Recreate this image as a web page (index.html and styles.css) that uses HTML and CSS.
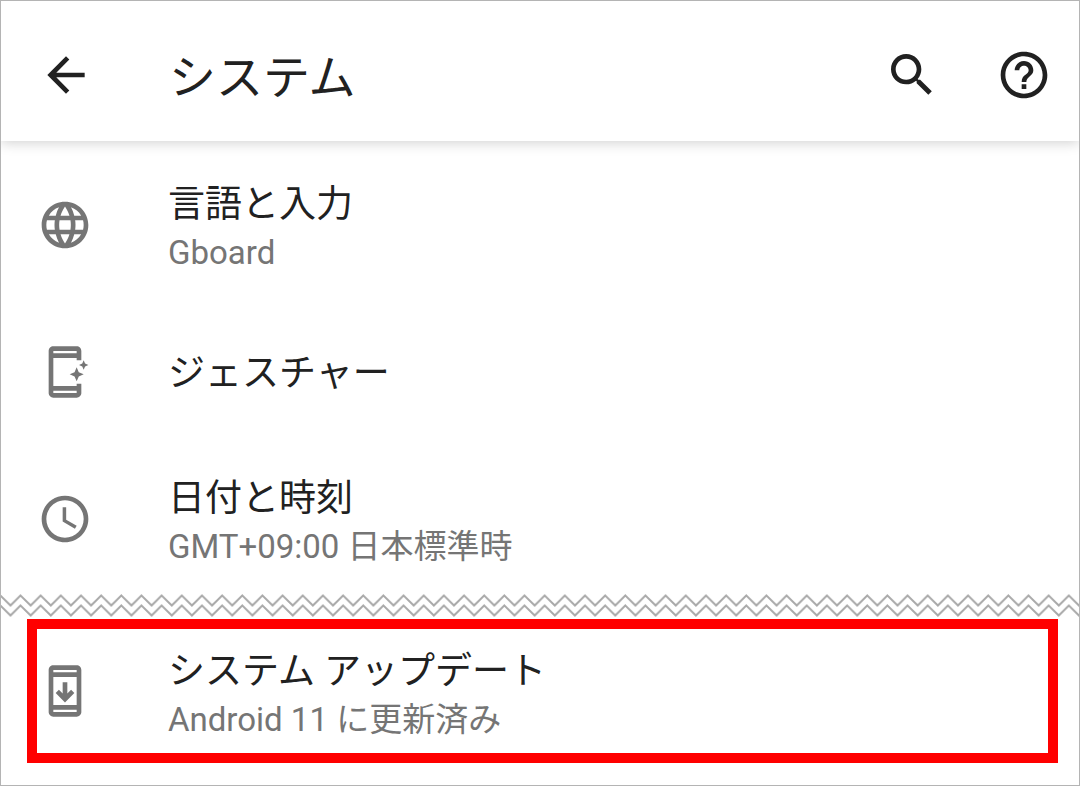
FILE: index.html
```html
<!DOCTYPE html>
<html lang="ja">

<head>
    <meta charset="UTF-8">
    <meta name="viewport" content="width=device-width, initial-scale=1.0">
    <title>システム</title>
    <link rel="stylesheet" href="styles.css">
</head>

<body>
    <div class="screen">
        <header class="bar">
            <button class="icon-btn" aria-label="戻る">
                <svg viewBox="0 0 24 24"><path d="M20 11H7.83l5.59-5.59L12 4l-8 8 8 8 1.41-1.41L7.83 13H20v-2z"/></svg>
            </button>
            <h1>システム</h1>
            <button class="icon-btn" aria-label="検索">
                <svg viewBox="0 0 24 24"><path d="M15.5 14h-.79l-.28-.27C15.41 12.59 16 11.11 16 9.5 16 5.91 13.09 3 9.5 3S3 5.91 3 9.5 5.91 16 9.5 16c1.61 0 3.09-.59 4.23-1.57l.27.28v.79l5 4.99L20.49 19l-4.99-5zm-6 0C7.01 14 5 11.99 5 9.5S7.01 5 9.5 5 14 7.01 14 9.5 11.99 14 9.5 14z"/></svg>
            </button>
            <button class="icon-btn" aria-label="ヘルプ">
                <svg viewBox="0 0 24 24"><path d="M11 18h2v-2h-2v2zm1-16C6.48 2 2 6.48 2 12s4.48 10 10 10 10-4.48 10-10S17.52 2 12 2zm0 18c-4.41 0-8-3.59-8-8s3.59-8 8-8 8 3.59 8 8-3.59 8-8 8zm0-14c-2.21 0-4 1.79-4 4h2c0-1.1.9-2 2-2s2 .9 2 2c0 2-3 1.75-3 5h2c0-2.25 3-2.5 3-5 0-2.21-1.79-4-4-4z"/></svg>
            </button>
        </header>

        <ul class="list">
            <li class="item">
                <svg viewBox="0 0 24 24"><path d="M11.99 2C6.47 2 2 6.48 2 12s4.47 10 9.99 10C17.52 22 22 17.52 22 12S17.52 2 11.99 2zm6.93 6h-2.95c-.32-1.25-.78-2.45-1.38-3.56 1.84.63 3.37 1.91 4.33 3.56zM12 4.04c.83 1.2 1.48 2.53 1.91 3.96h-3.82c.43-1.43 1.08-2.76 1.91-3.96zM4.26 14C4.1 13.36 4 12.69 4 12s.1-1.36.26-2h3.38c-.08.66-.14 1.32-.14 2s.06 1.34.14 2H4.26zm.82 2h2.95c.32 1.25.78 2.45 1.38 3.56-1.84-.63-3.37-1.9-4.33-3.56zm2.95-8H5.08c.96-1.66 2.49-2.93 4.33-3.56C8.81 5.55 8.35 6.75 8.03 8zM12 19.96c-.83-1.2-1.48-2.53-1.91-3.96h3.82c-.43 1.43-1.08 2.76-1.91 3.96zM14.34 14H9.66c-.09-.66-.16-1.32-.16-2s.07-1.35.16-2h4.68c.09.65.16 1.32.16 2s-.07 1.34-.16 2zm.25 5.56c.6-1.11 1.06-2.31 1.38-3.56h2.95c-.96 1.65-2.49 2.93-4.33 3.56zM16.36 14c.08-.66.14-1.32.14-2s-.06-1.34-.14-2h3.38c.16.64.26 1.31.26 2s-.1 1.36-.26 2h-3.38z"/></svg>
                <div class="text">
                    <h2>言語と入力</h2>
                    <p>Gboard</p>
                </div>
            </li>
            <li class="item">
                <svg viewBox="0 0 24 24">
                    <path fill-rule="evenodd" d="M7 1h10c1.1 0 2 .9 2 2v4h-2V6H7v12h10v-1h2v4c0 1.1-.9 2-2 2H7c-1.1 0-2-.9-2-2V3c0-1.1.9-2 2-2zm0 2v1h10V3zm0 17v1h10v-1z"/>
                    <path d="M17 10l.9 2.1 2.1.9-2.1.9L17 16l-.9-2.1L14 13l2.1-.9zM20 7l.6 1.4L22 9l-1.4.6L20 11l-.6-1.4L18 9l1.4-.6z"/>
                </svg>
                <div class="text">
                    <h2>ジェスチャー</h2>
                </div>
            </li>
            <li class="item">
                <svg viewBox="0 0 24 24"><path d="M11.99 2C6.47 2 2 6.48 2 12s4.47 10 9.99 10C17.52 22 22 17.52 22 12S17.52 2 11.99 2zM12 20c-4.42 0-8-3.58-8-8s3.58-8 8-8 8 3.58 8 8-3.58 8-8 8zM11 7h1.5v5.3l4.5 2.6-.75 1.3L11 13.1z"/></svg>
                <div class="text">
                    <h2>日付と時刻</h2>
                    <p>GMT+09:00 日本標準時</p>
                </div>
            </li>
        </ul>

        <!-- 省略の波線 -->
        <svg class="wave" aria-hidden="true">
            <defs>
                <pattern id="zigzag" width="20.16" height="24" patternUnits="userSpaceOnUse">
                    <path d="M-10.6 12.5L-.6 2.5 9.5 12.5 19.6 2.5 29.7 12.5M-10.6 22.5L-.6 12.5 9.5 22.5 19.6 12.5 29.7 22.5"/>
                </pattern>
            </defs>
            <rect width="100%" height="24" fill="url(#zigzag)"/>
        </svg>

        <div class="item marked">
            <svg viewBox="0 0 24 24"><path fill-rule="evenodd" d="M7 1h10c1.1 0 2 .9 2 2v18c0 1.1-.9 2-2 2H7c-1.1 0-2-.9-2-2V3c0-1.1.9-2 2-2zm0 2v1h10V3zm0 3v12h10V6zm0 14v1h10v-1zM11 8.2h2v4.9l1.6-1.6L16 12.9l-4 4-4-4 1.4-1.4 1.6 1.6z"/></svg>
            <div class="text">
                <h2>システム アップデート</h2>
                <p>Android 11 に更新済み</p>
            </div>
        </div>
    </div>
</body>

</html>
```
FILE: styles.css
```css
* {
    padding: 0;
    margin: 0;
    box-sizing: border-box;
}

body {
    background: #fff;
    color: #212121;
    font-family: Roboto, "Noto Sans CJK JP", sans-serif;
}

.screen {
    min-height: 100vh;
    border: 1px solid #b4b4b4;
}

.bar {
    display: flex;
    align-items: center;
    height: 140px;
    padding: 8px 27px 0 37px;
    box-shadow: 0 2px 12px rgba(0, 0, 0, 0.18);
    clip-path: inset(0 0 -16px 0);
}

.bar h1 {
    flex: 1;
    margin-left: 75px;
    padding-top: 5px;
    font-size: 47px;
    font-weight: 400;
    line-height: 56px;
}

.icon-btn {
    width: 56px;
    height: 56px;
    border: none;
    background: none;
    color: inherit;
}

.icon-btn + .icon-btn {
    margin-left: 56px;
}

svg {
    display: block;
    fill: currentColor;
}

.list {
    padding-top: 10px;
    list-style: none;
}

.item {
    display: flex;
    align-items: center;
    height: 147px;
    padding: 0 36px;
}

.item svg {
    flex: none;
    width: 56px;
    height: 56px;
    color: #757575;
}

.text {
    margin-left: 75px;
    padding-top: 5px;
}

.text h2 {
    font-size: 37px;
    font-weight: 400;
    line-height: 52px;
}

.text p {
    color: #757575;
    font-size: 33px;
    line-height: 44px;
}

.wave {
    width: 100%;
    height: 24px;
    margin-top: 1px;
}

.wave path {
    fill: none;
    stroke: #aaa;
    stroke-width: 2;
}

.marked {
    height: 144px;
    margin: 2px 21px 22px 26px;
    padding: 0;
    border: 10px solid #f00;
}
```
